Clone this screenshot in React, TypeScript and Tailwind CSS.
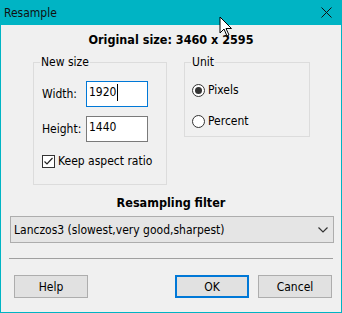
import React from "react";

const font = { fontFamily: '"DejaVu Sans Condensed", "DejaVu Sans", sans-serif' };

export default function App() {
  return (
    <div
      className="relative w-[342px] h-[313px] bg-[#00b4c4] flex flex-col text-[12px] text-black overflow-hidden"
      style={font}
    >
      {/* Title bar */}
      <div className="h-[25px] flex items-center justify-between pl-[4px] pr-[10px] shrink-0">
        <span className="text-[12px] text-[#111]">Resample</span>
        <svg width="11" height="11" viewBox="0 0 11 11">
          <path d="M0.5 0.5 L10.5 10.5 M10.5 0.5 L0.5 10.5" stroke="#111" strokeWidth="1" />
        </svg>
      </div>
      {/* Body */}
      <div className="mx-[1px] mb-[1px] flex-1 bg-[#f0f0f0] flex flex-col">
        <div className="text-center font-bold text-[12.5px] mt-[8px] leading-[14px]">
          Original size: 3460 x 2595
        </div>
        <div className="flex items-start mt-[8px]">
          <fieldset className="ml-[32px] w-[134px] h-[130px] border border-[#dcdcdc] p-0 flex flex-col">
            <legend className="ml-[6px] px-[1px] leading-[14px]">New size</legend>
            <div className="flex flex-col pl-[8px]">
              <div className="flex items-center mt-[12px]">
                <span className="w-[44px]">Width:</span>
                <div className="w-[62px] h-[26px] border border-[#0078d7] bg-white pl-[2px] pt-[3px] leading-[14px] flex items-start">
                  <span>1920</span>
                  <span className="inline-block w-[1px] h-[17px] bg-black ml-[1px] -mt-[1px]" />
                </div>
              </div>
              <div className="flex items-center mt-[9px]">
                <span className="w-[44px]">Height:</span>
                <div className="w-[62px] h-[26px] border border-[#7a7a7a] bg-white pl-[2px] pt-[3px] leading-[14px]">
                  1440
                </div>
              </div>
              <div className="flex items-center mt-[10px]">
                <div className="w-[13px] h-[13px] border border-[#333] bg-white flex items-center justify-center">
                  <svg width="11" height="11" viewBox="0 0 11 11">
                    <path d="M1.5 5.5 L4 8 L9.5 2" stroke="#222" strokeWidth="1.2" fill="none" />
                  </svg>
                </div>
                <span className="ml-[3px]">Keep aspect ratio</span>
              </div>
            </div>
          </fieldset>
          <fieldset className="ml-[17px] w-[126px] h-[82px] border border-[#dcdcdc] p-0 flex flex-col">
            <legend className="ml-[6px] px-[1px] leading-[14px]">Unit</legend>
            <div className="flex flex-col pl-[7px] leading-[14px]">
              <div className="flex items-center h-[14px] mt-[14px]">
                <div className="w-[13px] h-[13px] rounded-full border border-[#333] bg-white flex items-center justify-center">
                  <div className="w-[7px] h-[7px] rounded-full bg-[#333]" />
                </div>
                <span className="ml-[3px]">Pixels</span>
              </div>
              <div className="flex items-center h-[14px] mt-[17px]">
                <div className="w-[13px] h-[13px] rounded-full border border-[#333] bg-white" />
                <span className="ml-[3px]">Percent</span>
              </div>
            </div>
          </fieldset>
        </div>
        <div className="text-center font-bold text-[12.5px] mt-[11px] leading-[14px]">Resampling filter</div>
        <div className="ml-[9px] mr-[7px] mt-[6px] h-[27px] border border-[#adadad] bg-[#e5e5e5] flex items-center justify-between pl-[3px] pr-[5px]">
          <span>Lanczos3 (slowest,very good,sharpest)</span>
          <svg width="10" height="6" viewBox="0 0 10 6">
            <path d="M0.5 0.5 L5 5 L9.5 0.5" stroke="#333" strokeWidth="1.2" fill="none" />
          </svg>
        </div>
        <div className="ml-[8px] mr-[8px] mt-[15px] h-[1px] bg-[#a0a0a0]" />
        <div className="flex mt-[16px] pl-[13px] pr-[9px]">
          <div className="w-[74px] h-[23px] border border-[#adadad] bg-[#e1e1e1] flex items-center justify-center">Help</div>
          <div className="ml-auto w-[74px] h-[23px] border-2 border-[#0078d7] bg-[#e1e1e1] flex items-center justify-center">OK</div>
          <div className="ml-[9px] w-[74px] h-[23px] border border-[#adadad] bg-[#e1e1e1] flex items-center justify-center">Cancel</div>
        </div>
      </div>
      {/* mouse cursor */}
      <svg className="absolute left-[219px] top-[16px]" width="14" height="22" viewBox="0 0 14 22">
        <path d="M1 1 L1 17 L5 13 L8 20 L10 19 L7 12.5 L12.5 12.5 Z" fill="white" stroke="black" strokeWidth="1" />
      </svg>
    </div>
  );
}
